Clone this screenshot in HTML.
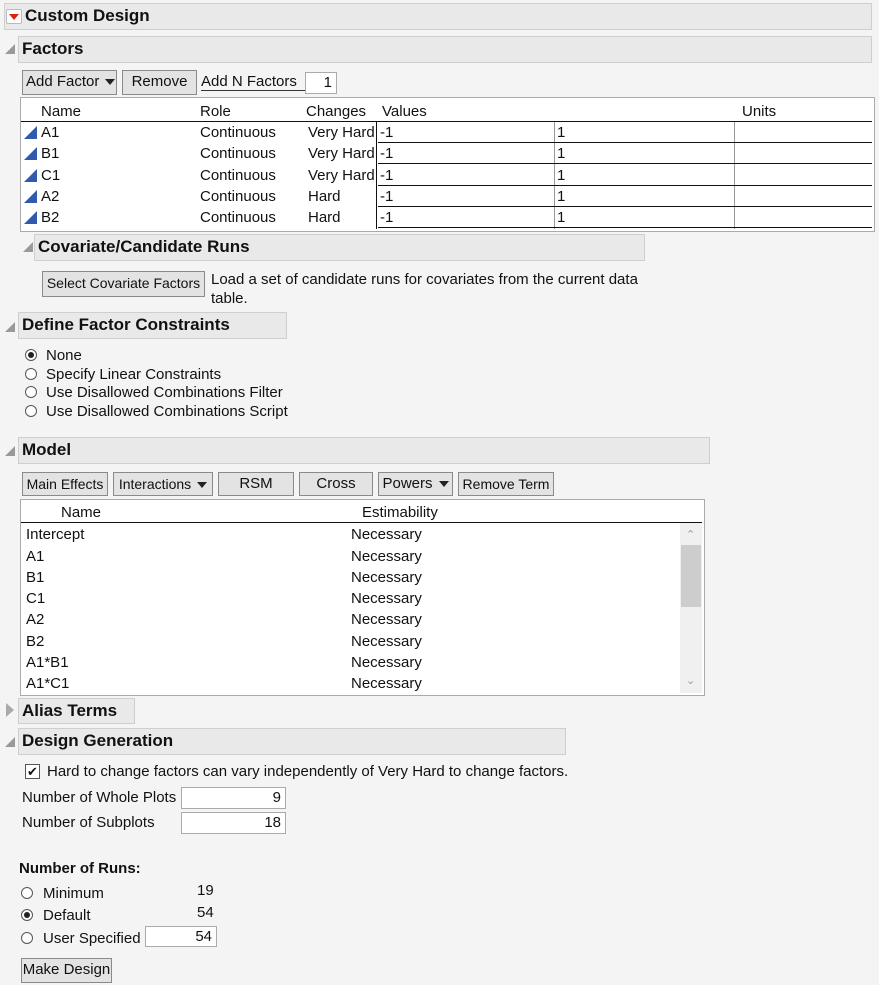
<!DOCTYPE html>
<html><head><meta charset="utf-8"><style>
body{margin:0;width:879px;height:985px;background:#f4f4f4;font-family:"Liberation Sans",sans-serif;font-size:15px;color:#111;position:relative;overflow:hidden}
.a{position:absolute;white-space:nowrap}
.hdr{position:absolute;background:#e9e9e9;border:1px solid #cfcfcf;font-weight:bold;font-size:17px;box-sizing:border-box;padding-left:3px;line-height:24px}
.tri{position:absolute;width:0;height:0;border-left:10px solid transparent;border-bottom:10px solid #999}
.btn{position:absolute;background:#e3e3e3;border:1px solid #8a8a8a;box-sizing:border-box;text-align:center;line-height:22px;font-size:15px}
.box{position:absolute;background:#fff}
.rad{position:absolute;width:12px;height:12px;border:1px solid #555;border-radius:50%;background:#fff;box-sizing:border-box}
.rad.on::after{content:"";position:absolute;left:2px;top:2px;width:6px;height:6px;border-radius:50%;background:#222}
.inp{position:absolute;background:#fff;border:1px solid #aaa;box-sizing:border-box;text-align:right;padding-right:4px;line-height:19px}
.fi{position:absolute;width:0;height:0;border-left:13px solid transparent;border-bottom:13px solid #2f5ab0}
.dd::after{content:"";display:inline-block;margin-left:6px;border-left:5px solid transparent;border-right:5px solid transparent;border-top:6px solid #222;vertical-align:middle}
</style></head><body>
<div class="hdr" style="left:4px;top:3px;width:868px;height:27px;padding-left:20px">Custom Design</div>
<div class="a" style="left:6px;top:9px;width:14px;height:13px;background:#fff;border:1px solid #bbb;border-radius:2px"></div>
<div class="a" style="left:9px;top:14px;border-left:5px solid transparent;border-right:5px solid transparent;border-top:6px solid #d21"></div>

<div class="tri" style="left:5px;top:44px"></div>
<div class="hdr" style="left:18px;top:36px;width:854px;height:27px">Factors</div>
<div class="btn dd" style="left:22px;top:70px;width:95px;height:25px;text-align:left;padding-left:3px">Add Factor</div>
<div class="btn" style="left:122px;top:70px;width:75px;height:25px">Remove</div>
<div class="a" style="left:201px;top:73px;border-bottom:1px solid #333;width:104px">Add N Factors</div>
<div class="inp" style="left:305px;top:72px;width:32px;height:22px">1</div>
<div class="box" style="left:20px;top:97px;width:853px;height:133px;border:1px solid #aaa"></div>
<div class="a" style="left:41px;top:103px">Name</div><div class="a" style="left:200px;top:103px">Role</div><div class="a" style="left:306px;top:103px">Changes</div><div class="a" style="left:382px;top:103px">Values</div><div class="a" style="left:742px;top:103px">Units</div>
<div class="a" style="left:21px;top:121px;width:851px;border-top:1px solid #111"></div>

<div class="tri" style="left:23px;top:242px"></div>
<div class="hdr" style="left:34px;top:234px;width:611px;height:27px">Covariate/Candidate Runs</div>
<div class="btn" style="left:42px;top:271px;width:163px;height:26px;font-size:14px">Select Covariate Factors</div>
<div class="a" style="left:211px;top:270px;line-height:19px">Load a set of candidate runs for covariates from the current data<br>table.</div>

<div class="tri" style="left:5px;top:322px"></div>
<div class="hdr" style="left:18px;top:312px;width:269px;height:27px">Define Factor Constraints</div>
<div class="rad on" style="left:25px;top:349px"></div><div class="a" style="left:46px;top:347px">None</div>
<div class="rad" style="left:25px;top:368px"></div><div class="a" style="left:46px;top:366px">Specify Linear Constraints</div>
<div class="rad" style="left:25px;top:386px"></div><div class="a" style="left:46px;top:384px">Use Disallowed Combinations Filter</div>
<div class="rad" style="left:25px;top:405px"></div><div class="a" style="left:46px;top:403px">Use Disallowed Combinations Script</div>

<div class="tri" style="left:5px;top:446px"></div>
<div class="hdr" style="left:18px;top:437px;width:692px;height:27px">Model</div>
<div class="btn" style="left:22px;top:472px;width:86px;height:24px;font-size:14px">Main Effects</div>
<div class="btn dd" style="left:113px;top:472px;width:100px;height:24px;font-size:14px">Interactions</div>
<div class="btn" style="left:218px;top:472px;width:76px;height:24px">RSM</div>
<div class="btn" style="left:299px;top:472px;width:74px;height:24px">Cross</div>
<div class="btn dd" style="left:378px;top:472px;width:75px;height:24px">Powers</div>
<div class="btn" style="left:458px;top:472px;width:96px;height:24px;font-size:14px">Remove Term</div>
<div class="box" style="left:20px;top:499px;width:683px;height:195px;border:1px solid #aaa"></div>
<div class="a" style="left:61px;top:504px">Name</div><div class="a" style="left:362px;top:504px">Estimability</div>
<div class="a" style="left:21px;top:522px;width:681px;border-top:1px solid #111"></div>
<div class="a" style="left:680px;top:523px;width:22px;height:170px;background:#f0f0f0"></div>
<div class="a" style="left:681px;top:545px;width:20px;height:62px;background:#cdcdcd"></div>
<div class="a" style="left:686px;top:528px;color:#999;font-size:11px">&#8963;</div>
<div class="a" style="left:686px;top:674px;color:#999;font-size:11px">&#8964;</div>

<div class="a" style="left:6px;top:703px;border-top:7px solid transparent;border-bottom:7px solid transparent;border-left:8px solid #aaa"></div>
<div class="hdr" style="left:18px;top:698px;width:117px;height:26px">Alias Terms</div>
<div class="tri" style="left:5px;top:737px"></div>
<div class="hdr" style="left:18px;top:728px;width:548px;height:27px">Design Generation</div>
<div class="a" style="left:25px;top:764px;width:13px;height:13px;border:1px solid #555;background:#fff;font-size:13px;line-height:13px;text-align:center">✔</div>
<div class="a" style="left:47px;top:763px">Hard to change factors can vary independently of Very Hard to change factors.</div>
<div class="a" style="left:22px;top:789px">Number of Whole Plots</div><div class="inp" style="left:181px;top:787px;width:105px;height:22px">9</div>
<div class="a" style="left:22px;top:814px">Number of Subplots</div><div class="inp" style="left:181px;top:812px;width:105px;height:22px">18</div>
<div class="a" style="left:19px;top:860px;font-weight:bold">Number of Runs:</div>
<div class="rad" style="left:21px;top:887px"></div><div class="a" style="left:43px;top:885px">Minimum</div><div class="a" style="left:197px;top:882px">19</div>
<div class="rad on" style="left:21px;top:909px"></div><div class="a" style="left:43px;top:907px">Default</div><div class="a" style="left:197px;top:904px">54</div>
<div class="rad" style="left:21px;top:932px"></div><div class="a" style="left:43px;top:930px">User Specified</div><div class="inp" style="left:145px;top:926px;width:72px;height:21px">54</div>
<div class="btn" style="left:21px;top:958px;width:91px;height:25px">Make Design</div>

<div class="a" style="left:0;top:0">
<div class="fi" style="left:24px;top:126px"></div><div class="a" style="left:41px;top:124px">A1</div><div class="a" style="left:200px;top:124px">Continuous</div><div class="a" style="left:308px;top:124px">Very Hard</div>
<div class="fi" style="left:24px;top:147px"></div><div class="a" style="left:41px;top:145px">B1</div><div class="a" style="left:200px;top:145px">Continuous</div><div class="a" style="left:308px;top:145px">Very Hard</div>
<div class="fi" style="left:24px;top:169px"></div><div class="a" style="left:41px;top:167px">C1</div><div class="a" style="left:200px;top:167px">Continuous</div><div class="a" style="left:308px;top:167px">Very Hard</div>
<div class="fi" style="left:24px;top:190px"></div><div class="a" style="left:41px;top:188px">A2</div><div class="a" style="left:200px;top:188px">Continuous</div><div class="a" style="left:308px;top:188px">Hard</div>
<div class="fi" style="left:24px;top:211px"></div><div class="a" style="left:41px;top:209px">B2</div><div class="a" style="left:200px;top:209px">Continuous</div><div class="a" style="left:308px;top:209px">Hard</div>
<div class="a" style="left:376px;top:122px;height:107px;border-left:1px solid #111"></div>
<div class="a" style="left:554px;top:122px;height:107px;border-left:1px solid #999"></div>
<div class="a" style="left:734px;top:122px;height:107px;border-left:1px solid #999"></div>
<div class="a" style="left:378px;top:142px;width:494px;border-top:1px solid #111"></div>
<div class="a" style="left:378px;top:163px;width:494px;border-top:1px solid #111"></div>
<div class="a" style="left:378px;top:185px;width:494px;border-top:1px solid #111"></div>
<div class="a" style="left:378px;top:206px;width:494px;border-top:1px solid #111"></div>
<div class="a" style="left:378px;top:227px;width:494px;border-top:1px solid #111"></div>
<div class="a" style="left:380px;top:124px">-1</div><div class="a" style="left:557px;top:124px">1</div>
<div class="a" style="left:380px;top:145px">-1</div><div class="a" style="left:557px;top:145px">1</div>
<div class="a" style="left:380px;top:167px">-1</div><div class="a" style="left:557px;top:167px">1</div>
<div class="a" style="left:380px;top:188px">-1</div><div class="a" style="left:557px;top:188px">1</div>
<div class="a" style="left:380px;top:209px">-1</div><div class="a" style="left:557px;top:209px">1</div>

<div class="a" style="left:26px;top:526px">Intercept</div><div class="a" style="left:351px;top:526px">Necessary</div>
<div class="a" style="left:26px;top:548px">A1</div><div class="a" style="left:351px;top:548px">Necessary</div>
<div class="a" style="left:26px;top:569px">B1</div><div class="a" style="left:351px;top:569px">Necessary</div>
<div class="a" style="left:26px;top:590px">C1</div><div class="a" style="left:351px;top:590px">Necessary</div>
<div class="a" style="left:26px;top:611px">A2</div><div class="a" style="left:351px;top:611px">Necessary</div>
<div class="a" style="left:26px;top:633px">B2</div><div class="a" style="left:351px;top:633px">Necessary</div>
<div class="a" style="left:26px;top:654px">A1*B1</div><div class="a" style="left:351px;top:654px">Necessary</div>
<div class="a" style="left:26px;top:675px">A1*C1</div><div class="a" style="left:351px;top:675px">Necessary</div>
</div>
</body></html>
